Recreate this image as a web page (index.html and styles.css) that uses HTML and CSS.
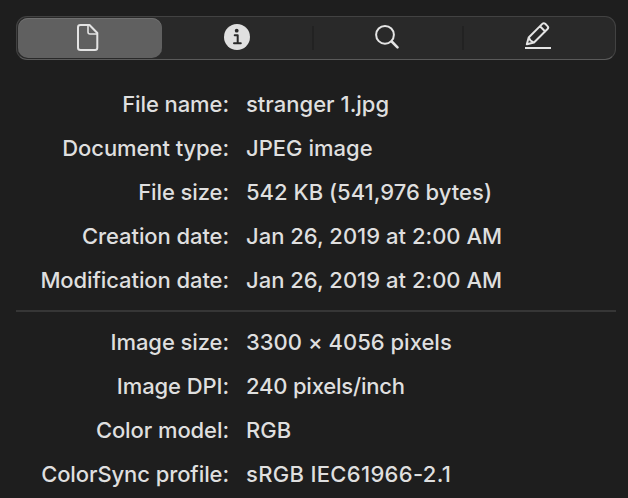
FILE: index.html
```html
<!DOCTYPE html>
<html lang="en">
<head>
<meta charset="utf-8">
<title>Image inspector</title>
<link rel="stylesheet" href="styles.css">
</head>
<body>
<nav class="tabs">
  <button class="tab selected" aria-label="General"><svg class="icon" width="30" height="32" viewBox="0 0 30 32"><path d="M7.500 3h9l7.800 8v14.700q0 2.300-2.300 2.300H7.500Q5 28 5 25.700V5.300Q5 3 7.500 3z"/><path class="fold" d="M15 3.500V10q0 2 2 2h7"/></svg></button>
  <button class="tab" aria-label="More info"><svg class="icon" width="30" height="32" viewBox="0 0 30 32"><circle class="solid" cx="14" cy="15" r="13"/><circle class="dark" cx="13.700" cy="8.700" r="1.900"/><path class="mark" d="M11.700 13.300h3v8M11 21.300h6.800"/></svg></button>
  <button class="tab" aria-label="Keywords"><svg class="icon" width="30" height="32" viewBox="0 0 30 32"><circle cx="12" cy="12.800" r="8.900"/><path class="handle" d="m18.700 19.500 5.800 5.800"/></svg></button>
  <button class="tab" aria-label="Annotations"><svg class="icon" width="30" height="32" viewBox="0 0 30 32"><path class="rule" d="M2 26h26"/><path d="M3.800 22.300 5.700 15.500 19.300 1.900q1.400-1.400 2.900-.1l2.300 2.300q1.400 1.400 0 2.900L11 20.500zM17 4.300l5.200 5.200M5.700 15.500l1.800 3 3.300 2"/></svg></button>
</nav>
<main>
<dl class="details">
  <dt>File name:</dt><dd>stranger 1.jpg</dd>
  <dt>Document type:</dt><dd>JPEG image</dd>
  <dt>File size:</dt><dd>542 KB (541,976 bytes)</dd>
  <dt>Creation date:</dt><dd>Jan 26, 2019 at 2:00 AM</dd>
  <dt>Modification date:</dt><dd>Jan 26, 2019 at 2:00 AM</dd>
</dl>
<hr>
<dl class="details">
  <dt>Image size:</dt><dd>3300 × 4056 pixels</dd>
  <dt>Image DPI:</dt><dd class="resolution">240 pixels/inch</dd>
  <dt>Color model:</dt><dd>RGB</dd>
  <dt>ColorSync profile:</dt><dd class="profile">sRGB IEC61966-2.1</dd>
</dl>
</main>
</body>
</html>
```
FILE: styles.css
```css
* { box-sizing: border-box; }
body { margin: 0; height: 498px; overflow: hidden; background: #1e1e1e; color: #dfdfdf; font: 450 22px/44px Inter, sans-serif; padding: 16px 12px 0 16px; }
.tabs { display: grid; grid-template-columns: 147px 150px 150px 1fr; height: 44px; border: 1px solid #424242; border-bottom-color: #5a5a5a; border-radius: 11px; background: #292929; }
.tab { display: flex; align-items: center; justify-content: center; border: 0; padding: 0; background: none; }
.tab:nth-child(2), .tab:nth-child(3) { padding-right: 2px; background: linear-gradient(#222, #222) right center / 2px 24px no-repeat; }
.tab:last-child { padding-right: 3px; }
.tab.selected { background: #606060; border-radius: 10px; margin: 1px 2px 1px 1px; padding-right: 4px; box-shadow: inset 0 1px #707070; }
.icon { fill: none; stroke: #e4e4e4; stroke-width: 2; stroke-linecap: round; stroke-linejoin: round; overflow: visible; }
.solid { fill: #e0e0e0; stroke: none; }
.dark { fill: #292929; stroke: none; }
.mark { stroke: #292929; stroke-width: 2; }
.fold { stroke-width: 1.600; }
.handle { stroke-width: 2.600; }
.rule { stroke-linecap: butt; }
main { padding-top: 22px; }
.details { display: grid; grid-template-columns: 213px 1fr; column-gap: 17px; margin: 0; }
dt { text-align: right; white-space: nowrap; letter-spacing: -.09px; }
dd { margin: 0; white-space: nowrap; letter-spacing: .01px; }
.resolution { letter-spacing: -.2px; }
.profile { letter-spacing: .32px; }
hr { height: 2px; border: 0; background: #363636; margin: 8px 0; }
```
